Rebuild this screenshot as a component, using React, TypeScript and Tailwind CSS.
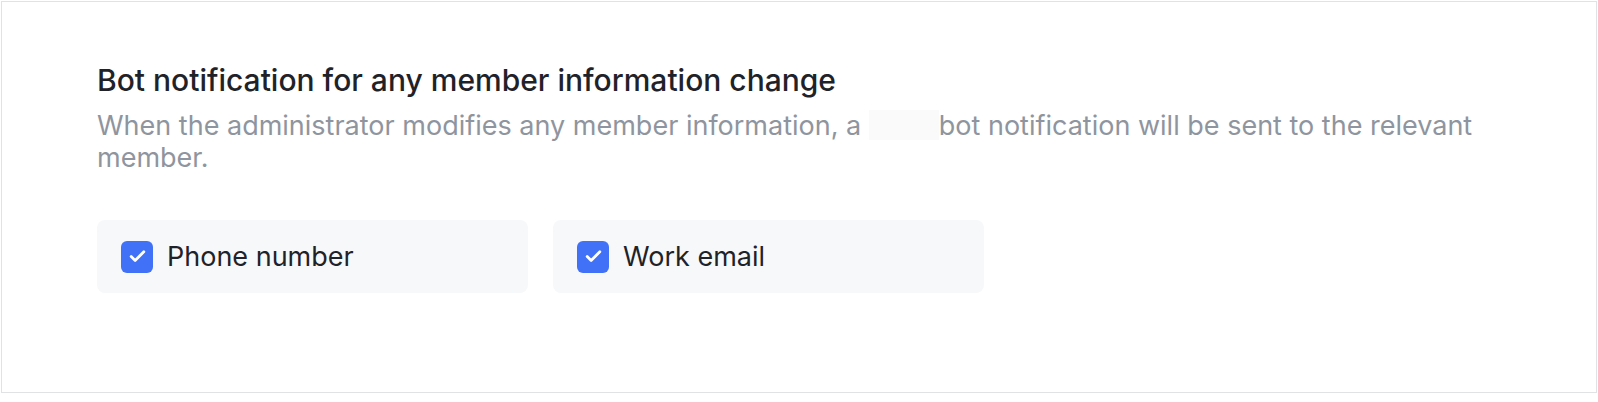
import { Check } from 'lucide-react';

const FIELDS = ['Phone number', 'Work email'];

function CheckCard({ label }: { label: string }) {
  return (
    <label className="flex h-[73px] w-[431px] items-center gap-[14px] rounded-lg bg-[#f7f8fa] pl-6">
      <span className="flex h-[32px] w-[32px] items-center justify-center rounded-[6px] bg-[#4171f6]">
        <Check className="h-[19px] w-[19px] text-white" strokeWidth={3.5} />
      </span>
      <span className="text-[27px] leading-[32px] text-[#1f2329]">{label}</span>
    </label>
  );
}

export default function App() {
  return (
    <div className="p-px" style={{ fontFamily: 'Inter, "Noto Sans", sans-serif' }}>
      <div className="h-[392px] w-[1596px] border border-[#e1e2e4] bg-white pl-[95px] pt-[60px]">
        <h2 className="text-[30px] leading-[36px] font-medium text-[#1f2329]">
          Bot notification for any member information change
        </h2>
        <p className="mt-[12px] w-[1410px] text-[27px] leading-[32px] text-[#8f959e]">
          When the administrator modifies any member information, a{' '}
          <span className="inline-block h-[30px] w-[70px] align-top bg-[#fafafa]" />
          bot notification will be sent to the relevant member.
        </p>
        <div className="mt-[46px] flex gap-[25px]">
          {FIELDS.map(f => (
            <CheckCard key={f} label={f} />
          ))}
        </div>
      </div>
    </div>
  );
}
